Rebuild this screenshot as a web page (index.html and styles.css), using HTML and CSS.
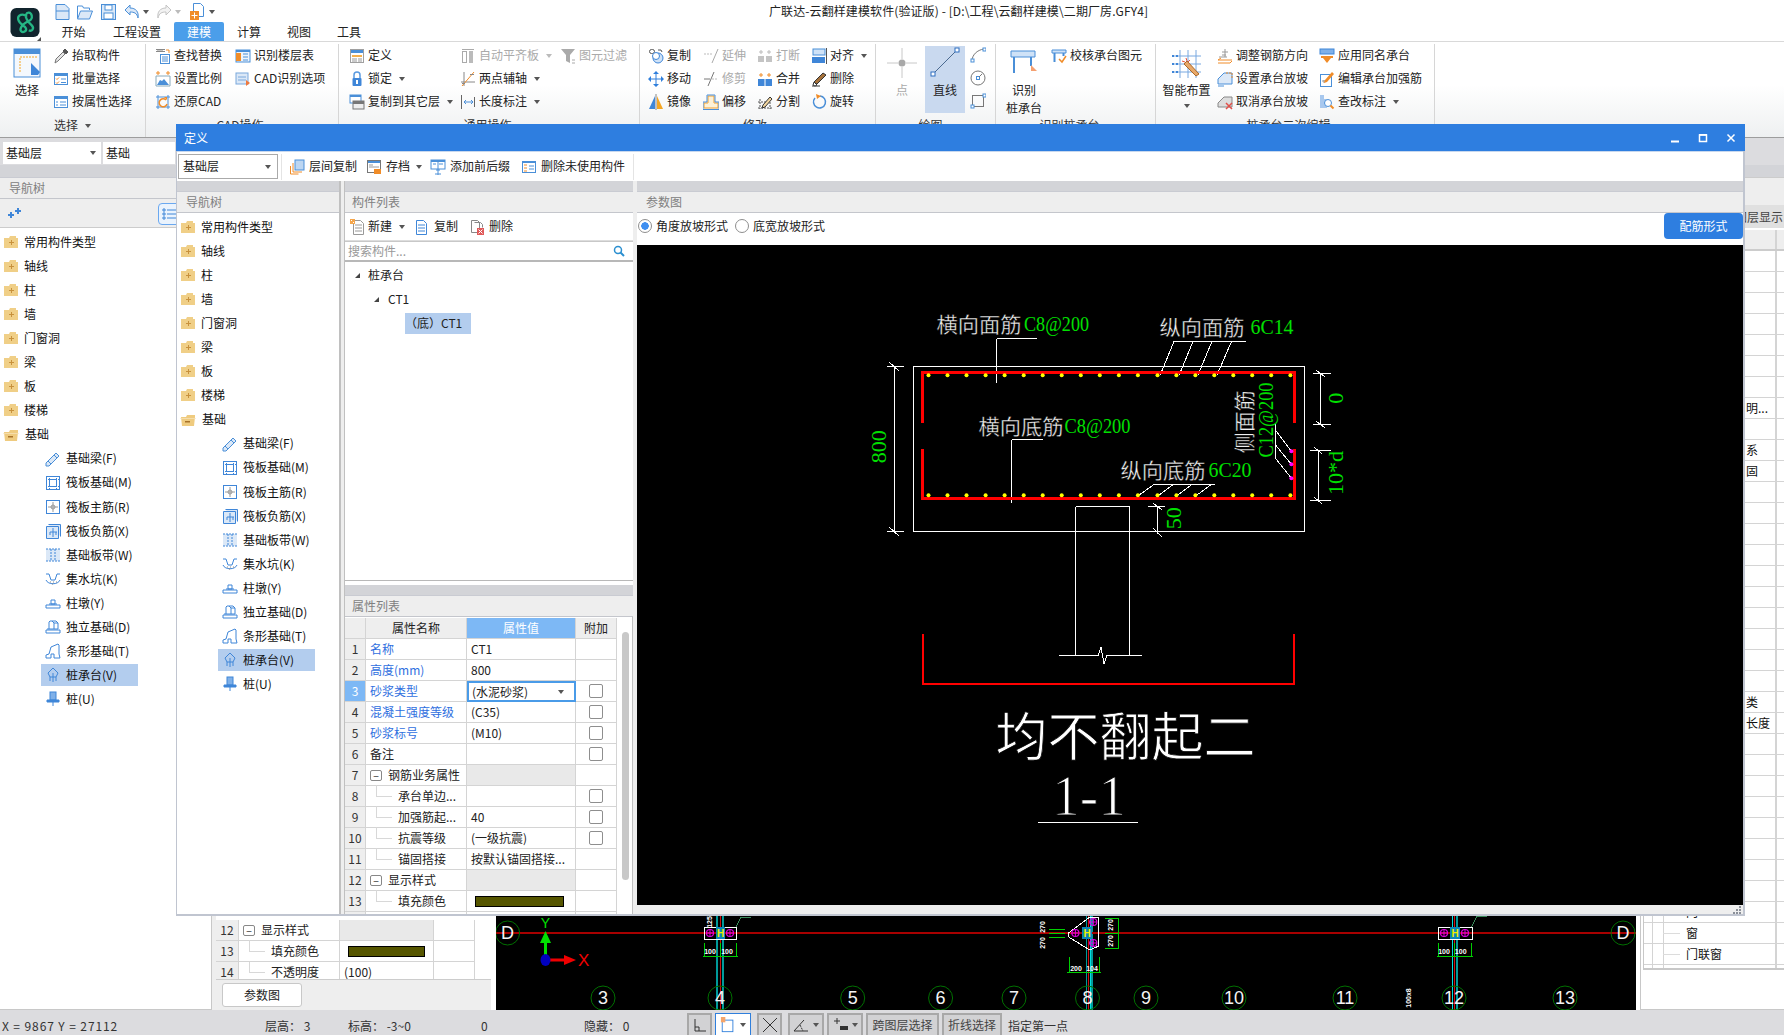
FILE: index.html
```html
<!DOCTYPE html>
<html lang="zh-CN">
<head>
<meta charset="utf-8">
<title>广联达-云翻样建模软件</title>
<link rel="stylesheet" href="styles.css">
</head>
<body>
<svg class="defs" width="0" height="0" aria-hidden="true">
<defs>
<symbol id="pick" viewBox="0 0 16 16"><path d="M2 15l1-4 7-7 2 2-7 7z" fill="#e6e6e6" stroke="#777"/><path d="M10 3l2-2 3 3-2 2z" fill="#555" stroke="#555"/></symbol>
<symbol id="batch" viewBox="0 0 16 16"><rect x="1.500" y="2.500" width="13" height="11" fill="#fff" stroke="#4a8fd8"/><rect x="1" y="2" width="14" height="3" fill="#4a8fd8"/><path d="M3 7.500l1 1 2-2M3 11.500l1 1 2-2" stroke="#f08c28" fill="none"/><path d="M8 8h5M8 11.500h5" stroke="#4a8fd8"/></symbol>
<symbol id="attr" viewBox="0 0 16 16"><rect x="1.500" y="2.500" width="13" height="11" fill="#fff" stroke="#4a8fd8"/><rect x="1" y="2" width="14" height="3" fill="#4a8fd8"/><path d="M3 8h2M3 11h2M7 8h6M7 11h6" stroke="#4a8fd8"/></symbol>
<symbol id="find" viewBox="0 0 16 16"><path d="M1 1.500h9M1 3.500h9M3 1v3M5 1v3M7 1v3" stroke="#888" fill="none"/><path d="M11 2h3v3" stroke="#f08c28" fill="none"/><rect x="5.500" y="6.500" width="9" height="9" fill="#fff" stroke="#4a8fd8"/><path d="M7 9h6M7 11h6M7 13h6" stroke="#4a8fd8"/></symbol>
<symbol id="floor" viewBox="0 0 16 16"><rect x="1" y="2" width="14" height="12" fill="#eef4fb" stroke="#4a8fd8"/><rect x="1" y="2" width="14" height="2" fill="#4a8fd8"/><rect x="1" y="5" width="5" height="8" fill="#f08c28"/><path d="M8 6h5M8 9h5M8 12h5" stroke="#4a8fd8"/></symbol>
<symbol id="scale" viewBox="0 0 16 16"><path d="M1 15V5h14v10z" fill="#fff" stroke="#8ab"/><path d="M2 14l3-5 2 1 2-2 5 6z" fill="#4a8fd8"/><path d="M3 0v4M1 2h4M13 0v4M11 2h4" stroke="#f08c28"/></symbol>
<symbol id="cadopt" viewBox="0 0 16 16"><rect x="1" y="2" width="12" height="11" fill="#dbe8f7" stroke="#7aa8dc"/><path d="M3 6h8M3 9h8" stroke="#7aa8dc"/><path d="M11 9l4 3-4 3z" fill="#f0793c"/></symbol>
<symbol id="restore" viewBox="0 0 16 16"><path d="M3 1v14M1 3h14M13 1v14M1 13h14" stroke="#4a8fd8" fill="none"/><path d="M11 6a4 4 0 1 0 1 4" stroke="#f08c28" fill="none" stroke-width="1.500"/><path d="M9 3h3v3z" fill="#f08c28"/></symbol>
<symbol id="def" viewBox="0 0 16 16"><rect x="1.500" y="1.500" width="13" height="13" fill="#fff" stroke="#a0a0a0"/><rect x="2" y="2" width="12" height="3" fill="#4a8fd8"/><rect x="3" y="7" width="10" height="2" fill="#f5b04c"/><path d="M3 11h5M9 11h4M3 13h5M9 13h4" stroke="#999"/></symbol>
<symbol id="lock" viewBox="0 0 16 16"><path d="M5 7V4a3 3 0 0 1 6 0v3" stroke="#5a9ae0" stroke-width="1.500" fill="none"/><rect x="3.500" y="7" width="9" height="8" rx="1" fill="#3f86d8"/><rect x="7" y="9" width="2" height="4" fill="#fff"/></symbol>
<symbol id="copyf" viewBox="0 0 16 16"><rect x="1" y="1" width="11" height="8" fill="#fff" stroke="#4a8fd8"/><rect x="1" y="1" width="11" height="2" fill="#4a8fd8"/><rect x="4" y="7" width="11" height="8" fill="#eee" stroke="#777"/><rect x="4" y="7" width="11" height="3" fill="#777"/></symbol>
<symbol id="autoalign" viewBox="0 0 16 16"><path d="M2 1.500h12" stroke="#aaa"/><rect x="2.500" y="3.500" width="4" height="11" fill="#fff" stroke="#aaa"/><rect x="9" y="3" width="4" height="12" fill="#bbb"/></symbol>
<symbol id="filter" viewBox="0 0 16 16"><path d="M1 1h14l-5 6v8l-4-2V7z" fill="#aaa"/><path d="M12 12h3M12 15h3" stroke="#aaa"/></symbol>
<symbol id="twopt" viewBox="0 0 16 16"><path d="M4 1v14M1 11h14" stroke="#888"/><path d="M14 1L2 15" stroke="#f08c28"/><path d="M10 3h4v1h-4zM2 12h3v1H2z" fill="#888"/></symbol>
<symbol id="length" viewBox="0 0 16 16"><path d="M1.500 1v14M14.500 3v10" stroke="#666"/><path d="M4 8h9M4 8l2-2M4 8l2 2M13 8l-2-2M13 8l-2 2" stroke="#4a8fd8" fill="none"/></symbol>
<symbol id="copy" viewBox="0 0 16 16"><rect x="1.500" y="1.500" width="5" height="4" fill="none" stroke="#555" rx="2"/><circle cx="10" cy="10" r="5" fill="#cfe2f7" stroke="#3f86d8"/><circle cx="8" cy="8" r="3.500" fill="#fff" stroke="#3f86d8"/><path d="M10 2h3l1 2" stroke="#555" fill="none"/></symbol>
<symbol id="move" viewBox="0 0 16 16"><path d="M8 1v14M1 8h14" stroke="#2f7fdc"/><path d="M8 0l3 3H5zM8 16l3-3H5zM0 8l3-3v6zM16 8l-3-3v6z" fill="#2f7fdc"/></symbol>
<symbol id="mirror" viewBox="0 0 16 16"><path d="M7 2v13H1z" fill="#3f86d8"/><path d="M9 2v13h6z" fill="#f5a623"/><path d="M8 0v16" stroke="#888"/></symbol>
<symbol id="extend" viewBox="0 0 16 16"><path d="M1 6h9" stroke="#bbb" stroke-dasharray="2 1"/><path d="M15 1L9 15" stroke="#aaa"/></symbol>
<symbol id="trim" viewBox="0 0 16 16"><path d="M1 8h6" stroke="#777"/><path d="M9 8h6" stroke="#bbb" stroke-dasharray="2 1"/><path d="M11 1L5 15" stroke="#777"/></symbol>
<symbol id="offset" viewBox="0 0 16 16"><path d="M1 14V9h4V2h6v7h4v5z" fill="#fdf2d8" stroke="#f0a030"/><path d="M0 15.500V8h4V1h8v7h4v7.500z" fill="none" stroke="#4a8fd8"/></symbol>
<symbol id="break" viewBox="0 0 16 16"><rect x="1" y="8" width="6" height="6" fill="#c4c4c4"/><rect x="9" y="8" width="6" height="6" fill="#c4c4c4"/><path d="M4 2v4M2 4h4M12 2v4M10 4h4" stroke="#bbb"/></symbol>
<symbol id="merge" viewBox="0 0 16 16"><rect x="1" y="8" width="14" height="7" fill="#3f86d8"/><path d="M8 8v7" stroke="#fff"/><path d="M4 2v4M2 4h4M12 2v4M10 4h4" stroke="#f08c28"/></symbol>
<symbol id="split" viewBox="0 0 16 16"><path d="M1 14h14M1 8h8M3 5v10M13 8v7" stroke="#555" fill="none" stroke-dasharray="2 1"/><path d="M6 11l7-8 2 2-7 8-3 1z" fill="#f3d7a0" stroke="#333"/></symbol>
<symbol id="align" viewBox="0 0 16 16"><rect x="2" y="1" width="12" height="6" fill="#cfe2f7" stroke="#4a8fd8"/><rect x="1" y="9" width="13" height="6" fill="#3f86d8"/><path d="M15.500 0v16" stroke="#555"/></symbol>
<symbol id="del" viewBox="0 0 16 16"><path d="M1 15h8" stroke="#333"/><path d="M4 12l-1-1 9-9 3 2-9 9-2-1z" fill="#a5713a" stroke="#333"/><path d="M3 11l3 3-2 1-2-1z" fill="#fff" stroke="#333"/></symbol>
<symbol id="rotate" viewBox="0 0 16 16"><path d="M9 2a6 6 0 1 1-5 2" fill="none" stroke="#4a8fd8" stroke-width="1.500"/><path d="M5 0l5 2-4 3z" fill="#f08c28"/></symbol>
<symbol id="arc" viewBox="0 0 16 16"><path d="M2 14C2 8 7 3 14 2" fill="none" stroke="#777"/><rect x="1" y="12" width="3" height="3" fill="#fff" stroke="#4a8fd8"/><rect x="13" y="1" width="3" height="3" fill="#fff" stroke="#4a8fd8"/></symbol>
<symbol id="circ" viewBox="0 0 16 16"><circle cx="8" cy="8" r="7" fill="none" stroke="#777"/><rect x="6.500" y="6.500" width="3" height="3" fill="#fff" stroke="#4a8fd8"/><path d="M9 7l3-3" stroke="#777"/></symbol>
<symbol id="rectd" viewBox="0 0 16 16"><rect x="2.500" y="2.500" width="11" height="11" fill="none" stroke="#777"/><rect x="1" y="12" width="3" height="3" fill="#fff" stroke="#4a8fd8"/><rect x="13" y="1" width="3" height="3" fill="#fff" stroke="#4a8fd8"/></symbol>
<symbol id="check" viewBox="0 0 16 16"><path d="M1 2h14v3H1z" fill="#cfe2f7" stroke="#4a8fd8"/><path d="M3.500 5v9M12.500 5v3" stroke="#4a8fd8" stroke-width="2"/><path d="M8 11l3 3 4-6" stroke="#f08c28" fill="none" stroke-width="1.500"/></symbol>
<symbol id="adjust" viewBox="0 0 16 16"><path d="M8 1v8M5 4h6M5 7h4M2 9h8" stroke="#999" fill="none"/><path d="M1 12h14M1 12l3-2M1 15h12M13 15l2-2" stroke="#f08c28" fill="none"/></symbol>
<symbol id="slope" viewBox="0 0 16 16"><path d="M1 8l6-6h8v11H1z" fill="#dbe8f7" stroke="#4a8fd8"/><path d="M9 2h6v6" fill="none" stroke="#f08c28" stroke-dasharray="2 1"/><path d="M1 15h6" stroke="#4a8fd8"/></symbol>
<symbol id="unslope" viewBox="0 0 16 16"><path d="M1 9l6-6h8v10H1z" fill="#ddd" stroke="#888"/><path d="M9 9l6 6M15 9l-6 6" stroke="#e0504a" stroke-width="1.500"/></symbol>
<symbol id="apply" viewBox="0 0 16 16"><rect x="1" y="1" width="14" height="5" fill="#7fb0e8" stroke="#3f86d8"/><rect x="2" y="8" width="12" height="2" fill="#f08c28"/><path d="M4 10h8l-4 5z" fill="#f08c28"/></symbol>
<symbol id="editr" viewBox="0 0 16 16"><rect x="1.500" y="3.500" width="11" height="12" fill="#fff" stroke="#4a8fd8"/><path d="M5 9v3M3 10h4" stroke="#999"/><path d="M6 9l7-8 2 2-7 8-3 1z" fill="#f08c28"/></symbol>
<symbol id="markedit" viewBox="0 0 16 16"><path d="M1 1h4v4h3v9H1z" fill="#a8c8ee"/><circle cx="9" cy="9" r="3.500" fill="#fff" stroke="#4a8fd8"/><path d="M11.500 11.500l3 3" stroke="#f08c28" stroke-width="2"/></symbol>
<symbol id="fclosed" viewBox="0 0 14 12"><path d="M0 2h5l1-2h6v2h2v10H0z" fill="#f0cf87"/><path d="M5 6h5v1H5z" fill="#c8913c"/><path d="M7 4h1v5H7z" fill="#c8913c"/></symbol>
<symbol id="fopen" viewBox="0 0 16 12"><path d="M1 3h5l1-2h8v2l-1 9H2z" fill="#efcb7f"/><path d="M0 4h16l-1 1H1z" fill="#f5ddab"/><path d="M5 7h5v1.500H5z" fill="#a8732a"/></symbol>
<symbol id="t-beam" viewBox="0 0 16 16"><path d="M1 12L11 2l3 3L4 15H1z" fill="#dbe8f7" stroke="#4a8fd8"/><path d="M3 10l3 3M9 4l3 3" stroke="#4a8fd8"/></symbol>
<symbol id="t-raft" viewBox="0 0 16 16"><rect x="1.500" y="1.500" width="13" height="13" fill="none" stroke="#3f86d8"/><rect x="4.500" y="4.500" width="7" height="7" fill="none" stroke="#3f86d8"/><path d="M1 4.500h14M1 11.500h14M4.500 1v14M11.500 1v14" stroke="#3f86d8" stroke-dasharray="1 1"/></symbol>
<symbol id="t-rmain" viewBox="0 0 16 16"><rect x="1.500" y="1.500" width="13" height="13" fill="#fff" stroke="#3f86d8"/><path d="M8 3v10M3 8h10" stroke="#999"/><circle cx="8" cy="8" r="2" fill="none" stroke="#999"/></symbol>
<symbol id="t-rneg" viewBox="0 0 16 16"><path d="M1.500 3.500h12v12h-12zM3.500 1.500h12v12" fill="#dbe8f7" stroke="#3f86d8"/><path d="M8 5v9M5 9h7M5 9v3M11 9v3" stroke="#3f86d8" fill="none"/></symbol>
<symbol id="t-strip" viewBox="0 0 16 16"><rect x="1" y="2" width="14" height="12" fill="#dbe8f7"/><path d="M1 2h14M1 14h14M6 2v12M10 2v12" stroke="#3f86d8" stroke-dasharray="2 1"/></symbol>
<symbol id="t-pit" viewBox="0 0 16 16"><path d="M1 3h3l2 6h4l2-6h3" fill="none" stroke="#3f86d8"/><path d="M1 9c2 5 12 5 14 0" fill="none" stroke="#3f86d8"/><path d="M5 11h1M8 11h1M11 11h1M7 13h1" stroke="#888"/></symbol>
<symbol id="t-pier" viewBox="0 0 16 16"><path d="M6 5h4v4H6zM4 9h8M1 10h14v3H1z" fill="none" stroke="#3f86d8"/></symbol>
<symbol id="t-iso" viewBox="0 0 16 16"><path d="M5 2h6l2 2v6H4V3zM1 11h14v3H1zM3 11V9" fill="#fff" stroke="#3f86d8"/><path d="M7 2l2 2h4M9 4v6" fill="none" stroke="#3f86d8"/></symbol>
<symbol id="t-stripf" viewBox="0 0 16 16"><path d="M1 15v-3l3-1 2-7 7-3 1 1v9l1 4H9v-4H6v4z" fill="#fff" stroke="#3f86d8"/></symbol>
<symbol id="t-cap" viewBox="0 0 16 16"><path d="M8 1l5 5-2 4H5L3 6z" fill="none" stroke="#3f86d8"/><path d="M5 10v4M8 6v9M11 10v4" stroke="#3f86d8"/></symbol>
<symbol id="t-pile" viewBox="0 0 16 16"><rect x="5" y="1" width="6" height="8" fill="#7fb0e8" stroke="#3f86d8"/><path d="M2 9h12v2H2zM8 11v4" fill="#3f86d8" stroke="#3f86d8"/></symbol>
<symbol id="b-floorcopy" viewBox="0 0 16 16"><rect x="6" y="1" width="9" height="10" fill="#bcd6f2" stroke="#4a8fd8"/><path d="M4 4v9h9M1.500 7v8h8" fill="none" stroke="#f08c28"/></symbol>
<symbol id="b-save" viewBox="0 0 16 16"><rect x="1.500" y="1.500" width="13" height="12" fill="#fff" stroke="#777"/><rect x="2" y="2" width="12" height="2" fill="#4a8fd8"/><path d="M3 6h4M3 8h10" stroke="#999"/><rect x="8" y="10" width="7" height="5" fill="#f08c28"/></symbol>
<symbol id="b-prefix" viewBox="0 0 16 16"><rect x="1" y="1" width="14" height="9" fill="#fff" stroke="#4a8fd8"/><rect x="1" y="1" width="14" height="2" fill="#4a8fd8"/><path d="M3 5h3M9 5h4M8 3v13M5 15h6M6 11h4" stroke="#4a8fd8"/></symbol>
<symbol id="b-delun" viewBox="0 0 16 16"><rect x="1.500" y="2.500" width="13" height="11" fill="#fff" stroke="#4a8fd8"/><rect x="1" y="2" width="14" height="2" fill="#4a8fd8"/><path d="M3 6h3M3 9h3M3 12h3" stroke="#f08c28"/><path d="M8 7h5M8 10h5" stroke="#4a8fd8"/></symbol>
<symbol id="b-new" viewBox="0 0 16 16"><path d="M3.500 1.500h7l3 3v11h-10z" fill="#fff" stroke="#999"/><path d="M5 6h7M5 9h7M5 12h7" stroke="#999"/><path d="M0 0h5v5H0z" fill="#f5a64c"/><path d="M1 1h1v1H1zM3 3h1v1H3z" fill="#fff"/></symbol>
<symbol id="b-dup" viewBox="0 0 16 16"><path d="M2.500 1.500h7l3 3v11h-10z" fill="#fff" stroke="#3f86d8"/><path d="M4 6h7M4 9h7M4 12h7" stroke="#3f86d8"/></symbol>
<symbol id="b-del" viewBox="0 0 16 16"><path d="M2.500 1.500h6l2 2v10h-8z" fill="#fff" stroke="#888"/><path d="M5.500 3.500h6l2 2v3" fill="none" stroke="#888"/><rect x="8" y="9" width="7" height="7" fill="#e05a5a"/><path d="M9.500 10.500l4 4M13.500 10.500l-4 4" stroke="#fff"/></symbol>
</defs>
</svg>

<div class="app">
  <header class="top">
    <div class="logo-cell">
      <svg class="logo" viewBox="0 0 30 30"><rect width="30" height="30" rx="6" fill="#11242d"/><path d="M17 9c-4-4-10-2-9 3s7 6 8 9-3 5-5 3 1-7 5-9 7-3 6-7-5-4-6-1 3 8 6 11 0 7-3 5" fill="none" stroke="#25b584" stroke-width="2.400"/></svg>
      <span class="logo-corner"></span>
    </div>
    <div class="top-main">
      <div class="qa">
        <svg class="qa-i" viewBox="0 0 14 16"><path d="M.5.500h9l4 4v11H.5z" fill="#dbe8f7" stroke="#4a8fd8"/><path d="M.5 7h13" stroke="#4a8fd8"/></svg>
        <svg class="qa-i m-open" viewBox="0 0 16 16"><path d="M.5 14V2h5l1 2h6v2" fill="none" stroke="#4a8fd8"/><path d="M.5 15l3-8h12l-3 8z" fill="#dbe8f7" stroke="#4a8fd8"/></svg>
        <svg class="qa-i m-save" viewBox="0 0 15 16"><rect x=".5" y=".5" width="14" height="15" fill="#dbe8f7" stroke="#4a8fd8"/><rect x="4" y="1" width="7" height="5" fill="#fff" stroke="#4a8fd8"/><rect x="3" y="9" width="9" height="6" fill="#fff" stroke="#4a8fd8"/></svg>
        <svg class="qa-i m-undo" viewBox="0 0 16 16"><path d="M6 1L1 6l5 5V8c4 0 7 1 8 6 1-6-2-10-8-10z" fill="#dbe8f7" stroke="#4a8fd8"/></svg>
        <span class="tri m-t1"></span>
        <svg class="qa-i m-redo" viewBox="0 0 16 16"><path d="M10 1l5 5-5 5V8C6 8 3 9 2 14 1 8 4 4 10 4z" fill="#f2f2f2" stroke="#c4c4c4"/></svg>
        <span class="tri tri-l m-t2"></span>
        <svg class="qa-i m-doc" viewBox="0 0 14 18"><path d="M3.500 .5h7l3 3v10H3.500z" fill="#fff" stroke="#4a8fd8"/><rect x="0" y="8" width="9" height="9" fill="#f08c28"/><path d="M4.500 9.500v6M1.500 12.500h6" stroke="#fff"/></svg>
        <span class="tri m-t3"></span>
        <span class="doc-title">广联达-云翻样建模软件(验证版) - [D:\工程\云翻样建模\二期厂房.GFY4]</span>
      </div>
      <nav class="tabs">
        <span class="tab">开始</span><span class="tab">工程设置</span><span class="tab tab-on">建模</span><span class="tab">计算</span><span class="tab">视图</span><span class="tab">工具</span>
      </nav>
    </div>
  </header>

  <section class="ribbon">
    <div class="grp g1">
      <div class="grp-body">
        <div class="big big-sel">
          <svg class="big-i i-sel" viewBox="0 0 28 30"><rect x="1" y="1" width="26" height="28" fill="#f4f8fd" stroke="#4a8fd8"/><rect x="1" y="1" width="26" height="5" fill="#4a8fd8"/><path d="M24 9H7v16" fill="none" stroke="#f5a623" stroke-dasharray="2 1"/><path d="M18 15l9 9-2 3h-7z" fill="#3f86d8"/></svg>
          <span>选择</span>
        </div>
        <div class="col">
          <div class="it"><svg class="i"><use href="#pick"/></svg>抬取构件</div>
          <div class="it"><svg class="i"><use href="#batch"/></svg>批量选择</div>
          <div class="it"><svg class="i"><use href="#attr"/></svg>按属性选择</div>
        </div>
      </div>
      <div class="grp-foot">选择<span class="tri"></span></div>
    </div>
    <div class="grp g2">
      <div class="grp-body">
        <div class="col w80">
          <div class="it"><svg class="i"><use href="#find"/></svg>查找替换</div>
          <div class="it"><svg class="i"><use href="#scale"/></svg>设置比例</div>
          <div class="it"><svg class="i"><use href="#restore"/></svg>还原CAD</div>
        </div>
        <div class="col">
          <div class="it"><svg class="i"><use href="#floor"/></svg>识别楼层表</div>
          <div class="it"><svg class="i"><use href="#cadopt"/></svg>CAD识别选项</div>
        </div>
      </div>
      <div class="grp-foot">CAD操作<span class="tri"></span></div>
    </div>
    <div class="grp g3">
      <div class="grp-body">
        <div class="col w111">
          <div class="it"><svg class="i"><use href="#def"/></svg>定义</div>
          <div class="it"><svg class="i"><use href="#lock"/></svg>锁定<span class="tri"></span></div>
          <div class="it"><svg class="i"><use href="#copyf"/></svg>复制到其它层<span class="tri"></span></div>
        </div>
        <div class="col w100">
          <div class="it off"><svg class="i"><use href="#autoalign"/></svg>自动平齐板<span class="tri tri-l"></span></div>
          <div class="it"><svg class="i"><use href="#twopt"/></svg>两点辅轴<span class="tri"></span></div>
          <div class="it"><svg class="i"><use href="#length"/></svg>长度标注<span class="tri"></span></div>
        </div>
        <div class="col">
          <div class="it off"><svg class="i"><use href="#filter"/></svg>图元过滤</div>
        </div>
      </div>
      <div class="grp-foot">通用操作<span class="tri"></span></div>
    </div>
    <div class="grp g4">
      <div class="grp-body">
        <div class="col w55">
          <div class="it"><svg class="i"><use href="#copy"/></svg>复制</div>
          <div class="it"><svg class="i"><use href="#move"/></svg>移动</div>
          <div class="it"><svg class="i"><use href="#mirror"/></svg>镜像</div>
        </div>
        <div class="col w54">
          <div class="it off"><svg class="i"><use href="#extend"/></svg>延伸</div>
          <div class="it off"><svg class="i"><use href="#trim"/></svg>修剪</div>
          <div class="it"><svg class="i"><use href="#offset"/></svg>偏移</div>
        </div>
        <div class="col w54">
          <div class="it off"><svg class="i"><use href="#break"/></svg>打断</div>
          <div class="it"><svg class="i"><use href="#merge"/></svg>合并</div>
          <div class="it"><svg class="i"><use href="#split"/></svg>分割</div>
        </div>
        <div class="col">
          <div class="it"><svg class="i"><use href="#align"/></svg>对齐<span class="tri"></span></div>
          <div class="it"><svg class="i"><use href="#del"/></svg>删除</div>
          <div class="it"><svg class="i"><use href="#rotate"/></svg>旋转</div>
        </div>
      </div>
      <div class="grp-foot">修改<span class="tri"></span></div>
    </div>
    <div class="grp g5">
      <div class="grp-body">
        <div class="big big-pt off">
          <svg class="big-i i-pt" viewBox="0 0 30 30"><path d="M15 0v11M15 19v11M0 15h11M19 15h11" stroke="#c8c8c8"/><circle cx="15" cy="15" r="3.500" fill="#a8a8a8"/></svg>
          <span>点</span>
        </div>
        <div class="big big-line">
          <svg class="big-i i-line" viewBox="0 0 30 30"><path d="M3 27L27 3" stroke="#4a6a90"/><rect x="1" y="25" width="4" height="4" fill="#fff" stroke="#2f6fc0"/><rect x="25" y="1" width="4" height="4" fill="#fff" stroke="#2f6fc0"/></svg>
          <span>直线</span>
        </div>
        <div class="col col-draw">
          <svg class="i"><use href="#arc"/></svg>
          <svg class="i"><use href="#circ"/></svg>
          <svg class="i"><use href="#rectd"/></svg>
        </div>
      </div>
      <div class="grp-foot">绘图<span class="tri"></span></div>
    </div>
    <div class="grp g6">
      <div class="grp-body">
        <div class="big big-pile">
          <svg class="big-i i-pile" viewBox="0 0 28 24"><path d="M1 1h24v6H1z" fill="#cfe2f7" stroke="#4a8fd8"/><path d="M4 7v16M21 7v9" stroke="#4a8fd8" stroke-width="2"/><path d="M21 15l6 6h-6z" fill="#f5a070"/></svg>
          <span>识别<br>桩承台</span>
        </div>
        <div class="col">
          <div class="it"><svg class="i"><use href="#check"/></svg>校核承台图元</div>
        </div>
      </div>
      <div class="grp-foot">识别桩承台<span class="tri"></span></div>
    </div>
    <div class="grp g7">
      <div class="grp-body">
        <div class="big big-smart">
          <svg class="big-i i-smart" viewBox="0 0 30 30"><path d="M1 6h28M1 14h28M1 22h28M8 0v28M16 0v28M24 0v28" stroke="#78a8e0"/><path d="M0 6h6M0 14h6M0 22h6" stroke="#3f86d8" stroke-width="2" stroke-dasharray="2 2"/><path d="M12 14l12 12 3-2L15 11z" fill="#e8a868" stroke="#a8682c"/><path d="M10 11l3 1M14 8l1 3M18 10l-2 2" stroke="#e8503a"/></svg>
          <span>智能布置</span>
          <span class="tri tri-down"></span>
        </div>
        <div class="col w102">
          <div class="it"><svg class="i"><use href="#adjust"/></svg>调整钢筋方向</div>
          <div class="it"><svg class="i"><use href="#slope"/></svg>设置承台放坡</div>
          <div class="it"><svg class="i"><use href="#unslope"/></svg>取消承台放坡</div>
        </div>
        <div class="col">
          <div class="it"><svg class="i"><use href="#apply"/></svg>应用同名承台</div>
          <div class="it"><svg class="i"><use href="#editr"/></svg>编辑承台加强筋</div>
          <div class="it"><svg class="i"><use href="#markedit"/></svg>查改标注<span class="tri"></span></div>
        </div>
      </div>
      <div class="grp-foot">桩承台二次编辑<span class="tri"></span></div>
    </div>
  </section>

  <main class="work">
    <div class="floorbar">
      <div class="combo c-floor">基础层<span class="tri"></span></div>
      <div class="combo c-type">基础</div>
    </div>
    <div class="band"></div>
    <div class="panes">
      <aside class="bgnav">
        <div class="phead">导航树</div>
        <div class="navtools">
          <svg class="addi" viewBox="0 0 14 12"><path d="M3 4v6M0 7h6M10 0v6M7 3h6" stroke="#3f86d8" stroke-width="2"/></svg>
          <span class="listbtn"><svg viewBox="0 0 16 16"><path d="M2 3h2v2H2zM2 7h2v2H2zM2 11h2v2H2z" fill="none" stroke="#3f86d8"/><path d="M6 4h9M6 8h9M6 12h9" stroke="#3f86d8"/></svg></span>
        </div>
        <div class="tree">
          <div class="tr"><svg class="fd"><use href="#fclosed"/></svg>常用构件类型</div>
          <div class="tr"><svg class="fd"><use href="#fclosed"/></svg>轴线</div>
          <div class="tr"><svg class="fd"><use href="#fclosed"/></svg>柱</div>
          <div class="tr"><svg class="fd"><use href="#fclosed"/></svg>墙</div>
          <div class="tr"><svg class="fd"><use href="#fclosed"/></svg>门窗洞</div>
          <div class="tr"><svg class="fd"><use href="#fclosed"/></svg>梁</div>
          <div class="tr"><svg class="fd"><use href="#fclosed"/></svg>板</div>
          <div class="tr"><svg class="fd"><use href="#fclosed"/></svg>楼梯</div>
          <div class="tr"><svg class="fd fo"><use href="#fopen"/></svg>基础</div>
          <div class="tr ch"><span class="sel-w"><svg class="i"><use href="#t-beam"/></svg>基础梁(F)</span></div>
          <div class="tr ch"><span class="sel-w"><svg class="i"><use href="#t-raft"/></svg>筏板基础(M)</span></div>
          <div class="tr ch"><span class="sel-w"><svg class="i"><use href="#t-rmain"/></svg>筏板主筋(R)</span></div>
          <div class="tr ch"><span class="sel-w"><svg class="i"><use href="#t-rneg"/></svg>筏板负筋(X)</span></div>
          <div class="tr ch"><span class="sel-w"><svg class="i"><use href="#t-strip"/></svg>基础板带(W)</span></div>
          <div class="tr ch"><span class="sel-w"><svg class="i"><use href="#t-pit"/></svg>集水坑(K)</span></div>
          <div class="tr ch"><span class="sel-w"><svg class="i"><use href="#t-pier"/></svg>柱墩(Y)</span></div>
          <div class="tr ch"><span class="sel-w"><svg class="i"><use href="#t-iso"/></svg>独立基础(D)</span></div>
          <div class="tr ch"><span class="sel-w"><svg class="i"><use href="#t-stripf"/></svg>条形基础(T)</span></div>
          <div class="tr ch"><span class="sel-w on"><svg class="i"><use href="#t-cap"/></svg>桩承台(V)</span></div>
          <div class="tr ch"><span class="sel-w"><svg class="i"><use href="#t-pile"/></svg>桩(U)</span></div>
        </div>
      </aside>

      <section class="bgmid">
        <div class="bgtable">
          <div class="brow"><span class="num">12</span><span class="nm gl"><i class="minus">−</i>显示样式</span><span class="val grey"></span><span class="ex"></span></div>
          <div class="brow"><span class="num">13</span><span class="nm kid">填充颜色</span><span class="val"><i class="swatch sw-b"></i></span><span class="ex"></span></div>
          <div class="brow brow-cut"><span class="num">14</span><span class="nm kid">不透明度</span><span class="val">(100)</span><span class="ex"></span></div>
        </div>
        <div class="bgfoot"><span class="parambtn">参数图</span></div>
      </section>

      <section class="cad">
        <svg class="cad-svg" viewBox="496 177 1140 833" width="1140" height="833">
          <g class="al">
            <path class="teal" d="M717 916V1010M722.800 916V1010M1086.600 916V1010M1092 916V1010M1457 916V1010"/>
            <path class="cy" d="M1452 916V1010M1090 916V1010"/>
            <path class="rl" d="M720.500 916V1010M1088.500 916V1010M1454 916V1010"/>
            <path class="dr" d="M496 933H1636"/>
            <rect class="wl" x="704.500" y="927.500" width="32" height="12"/>
            <rect class="wl" x="1438.500" y="927.500" width="34" height="12"/>
            <path class="wl" d="M1068.700 933L1089.700 917H1098.700V946L1089.700 950L1068.700 937Z"/>
            <path class="gr" d="M702.700 956H738M704.500 943V957M720.500 943V957M736 943V957M1436.700 956H1472.700M1438.500 943V957M1454 943V957M1471 943V957M1048.700 929H1065M1048.700 933H1065M1048.700 937H1065M1104.500 918H1118.700M1104.500 933H1118.700M1104.500 948H1118.700M1118 918V949M1067.400 972H1101M1069.600 957V972M1099 957V972"/>
            <path class="dg" d="M736 927L741 917H751M1471.700 927L1476.700 916.700H1486.700"/>
          </g>
          <g class="mg">
            <circle cx="710" cy="933" r="3.500"/><circle cx="730" cy="933" r="3.500"/><circle cx="1075.400" cy="933" r="3.500"/><circle cx="1093.300" cy="922" r="3.500"/><circle cx="1093.300" cy="943" r="3.500"/><circle cx="1444" cy="933" r="3.500"/><circle cx="1465" cy="933" r="3.500"/>
            <path d="M706 933h8M710 929v8M726 933h8M730 929v8M1071 933h8M1075.400 929v8M1089 922h8M1093.300 918v8M1089 943h8M1093.300 939v8M1440 933h8M1444 929v8M1461 933h8M1465 929v8"/>
          </g>
          <g class="sq">
            <rect x="716" y="927" width="9" height="12"/><rect x="1082" y="927" width="10" height="12"/><rect x="1450" y="927" width="10" height="12"/>
          </g>
          <g class="hh">
            <text x="720.500" y="937">H</text><text x="1087" y="937">H</text><text x="1455" y="937">H</text>
          </g>
          <g class="tiny">
            <text x="710" y="954">100</text><text x="727" y="954">100</text><text x="1444" y="954">100</text><text x="1460.700" y="954">100</text>
            <text x="1076" y="971">200</text><text x="1092" y="971">104</text>
            <text x="712" y="922" transform="rotate(-90 712 922)">125</text>
            <text x="1045" y="927" transform="rotate(-90 1045 927)">270</text>
            <text x="1045" y="943" transform="rotate(-90 1045 943)">270</text>
            <text x="1113" y="925" transform="rotate(-90 1113 925)">270</text>
            <text x="1113" y="941" transform="rotate(-90 1113 941)">270</text>
            <text x="1411" y="998" transform="rotate(-90 1411 998)">100x8</text>
          </g>
          <g class="bub">
            <circle cx="507.600" cy="933" r="12"/><circle cx="1623" cy="933" r="12"/>
            <circle cx="603" cy="998" r="12"/><circle cx="720" cy="998" r="12"/><circle cx="852.700" cy="998" r="12"/><circle cx="940.600" cy="998" r="12"/><circle cx="1014" cy="998" r="12"/><circle cx="1087.500" cy="998" r="12"/><circle cx="1146" cy="998" r="12"/><circle cx="1234" cy="998" r="12"/><circle cx="1345" cy="998" r="12"/><circle cx="1454" cy="998" r="12"/><circle cx="1565" cy="998" r="12"/>
          </g>
          <g class="bubt">
            <text x="507.600" y="939">D</text><text x="1623" y="939">D</text>
            <text x="603" y="1004">3</text><text x="720" y="1004">4</text><text x="852.700" y="1004">5</text><text x="940.600" y="1004">6</text><text x="1014" y="1004">7</text><text x="1087.500" y="1004">8</text><text x="1146" y="1004">9</text><text x="1234" y="1004">10</text><text x="1345" y="1004">11</text><text x="1454" y="1004">12</text><text x="1565" y="1004">13</text>
          </g>
          <path class="axg" d="M545.500 960V941"/><path class="axgf" d="M545.500 931L540 943H551Z"/>
          <path class="axr" d="M545.500 960H566"/><path class="axrf" d="M576 960L564 955V965Z"/>
          <ellipse class="axb" cx="545.500" cy="960" rx="5" ry="6"/>
          <text class="axty" x="545.500" y="928">Y</text>
          <text class="axtx" x="578" y="966">X</text>
        </svg>
      </section>

      <aside class="bgright">
        <div class="rtop"></div>
        <div class="rtabs"><span class="rtab">图层显示</span></div>
        <div class="rtable">
          <div class="rrow rhead"></div>
          <div class="rrow"></div><div class="rrow"></div><div class="rrow"></div><div class="rrow"></div><div class="rrow"></div><div class="rrow"></div><div class="rrow"></div>
          <div class="rrow"><span class="rt-hi">明...</span></div>
          <div class="rrow"></div>
          <div class="rrow"><span class="rt-hi">系</span></div>
          <div class="rrow"><span class="rt-hi">固</span></div>
          <div class="rrow"></div><div class="rrow"></div><div class="rrow"></div><div class="rrow"></div><div class="rrow"></div><div class="rrow"></div><div class="rrow"></div><div class="rrow"></div><div class="rrow"></div>
          <div class="rrow"></div>
          <div class="rrow"><span class="rt-hi">类</span></div>
          <div class="rrow"><span class="rt-hi">长度</span></div>
          <div class="rrow"></div><div class="rrow"></div><div class="rrow"></div><div class="rrow"></div><div class="rrow"></div><div class="rrow"></div><div class="rrow"></div><div class="rrow"></div>
          <div class="rrow rt-tree"><span class="rt-lo">门</span></div>
          <div class="rrow rt-tree"><span class="rt-lo">窗</span></div>
          <div class="rrow rt-tree"><span class="rt-lo">门联窗</span></div>
          <div class="rrow rt-tree rt-end"></div>
        </div>
      </aside>
    </div>
  </main>

  <footer class="status">
    <span class="s-t s-xy">X = 9867 Y = 27112</span>
    <span class="s-t">层高： 3</span>
    <span class="s-t">标高： -3~0</span>
    <span class="s-t">0</span>
    <span class="s-t">隐藏： 0</span>
    <span class="sb mr3"><svg viewBox="0 0 16 16"><path d="M3 2v12h11M3 10h4v4" fill="none" stroke="#333"/></svg></span>
    <span class="sb sb-on mr6"><svg viewBox="0 0 16 18"><rect x="1.500" y="3.500" width="12" height="13" fill="#fff" stroke="#2f7fdc"/><rect x="0" y="0" width="5" height="6" fill="#f5a56a"/></svg><i class="tri"></i></span>
    <span class="sb mr6"><svg viewBox="0 0 16 16"><path d="M1 1l14 14M15 1L1 15" stroke="#333"/></svg></span>
    <span class="sb mr3"><svg viewBox="0 0 16 16"><path d="M1 14h14M1 14L11 3" stroke="#333" fill="none"/><path d="M7 8l3 6" stroke="#333" stroke-dasharray="2 1"/></svg><i class="tri"></i></span>
    <span class="sb mr3"><svg viewBox="0 0 16 16"><path d="M5 1v6M2 4h6" stroke="#333"/><rect x="8" y="9" width="8" height="4" fill="#333"/></svg><i class="tri"></i></span>
    <span class="sb sb-txt mr3">跨图层选择</span>
    <span class="sb sb-txt mr6">折线选择</span>
    <span class="s-t">指定第一点</span>
  </footer>

  <div class="dialog">
    <div class="d-title">
      <span class="d-name">定义</span>
      <span class="d-btns">
        <svg viewBox="0 0 10 10"><path d="M1 8.500h8" stroke="#fff" stroke-width="2"/></svg>
        <svg viewBox="0 0 10 10"><rect x="1.500" y="2" width="7" height="6.500" fill="none" stroke="#fff" stroke-width="1.500"/><path d="M1 1.800h8" stroke="#fff" stroke-width="1.600"/></svg>
        <svg viewBox="0 0 10 10"><path d="M1.500 1.500l7 7M8.500 1.500l-7 7" stroke="#fff" stroke-width="1.500"/></svg>
      </span>
    </div>
    <div class="d-inner">
      <div class="d-tools">
        <div class="combo d-combo">基础层<span class="tri"></span></div>
        <span class="sep"></span>
        <span class="tb b1"><svg class="i"><use href="#b-floorcopy"/></svg>层间复制</span>
        <span class="tb b2"><svg class="i"><use href="#b-save"/></svg>存档<span class="tri"></span></span>
        <span class="tb b3"><svg class="i"><use href="#b-prefix"/></svg>添加前后缀</span>
        <span class="tb b4"><svg class="i"><use href="#b-delun"/></svg>删除未使用构件</span>
        <span class="sep"></span>
      </div>
      <div class="d-body">
        <div class="d-col d-nav">
          <div class="band-s"></div>
          <div class="phead">导航树</div>
          <div class="tree tree-d">
            <div class="tr"><svg class="fd"><use href="#fclosed"/></svg>常用构件类型</div>
            <div class="tr"><svg class="fd"><use href="#fclosed"/></svg>轴线</div>
            <div class="tr"><svg class="fd"><use href="#fclosed"/></svg>柱</div>
            <div class="tr"><svg class="fd"><use href="#fclosed"/></svg>墙</div>
            <div class="tr"><svg class="fd"><use href="#fclosed"/></svg>门窗洞</div>
            <div class="tr"><svg class="fd"><use href="#fclosed"/></svg>梁</div>
            <div class="tr"><svg class="fd"><use href="#fclosed"/></svg>板</div>
            <div class="tr"><svg class="fd"><use href="#fclosed"/></svg>楼梯</div>
            <div class="tr"><svg class="fd fo"><use href="#fopen"/></svg>基础</div>
            <div class="tr ch"><span class="sel-w"><svg class="i"><use href="#t-beam"/></svg>基础梁(F)</span></div>
            <div class="tr ch"><span class="sel-w"><svg class="i"><use href="#t-raft"/></svg>筏板基础(M)</span></div>
            <div class="tr ch"><span class="sel-w"><svg class="i"><use href="#t-rmain"/></svg>筏板主筋(R)</span></div>
            <div class="tr ch"><span class="sel-w"><svg class="i"><use href="#t-rneg"/></svg>筏板负筋(X)</span></div>
            <div class="tr ch"><span class="sel-w"><svg class="i"><use href="#t-strip"/></svg>基础板带(W)</span></div>
            <div class="tr ch"><span class="sel-w"><svg class="i"><use href="#t-pit"/></svg>集水坑(K)</span></div>
            <div class="tr ch"><span class="sel-w"><svg class="i"><use href="#t-pier"/></svg>柱墩(Y)</span></div>
            <div class="tr ch"><span class="sel-w"><svg class="i"><use href="#t-iso"/></svg>独立基础(D)</span></div>
            <div class="tr ch"><span class="sel-w"><svg class="i"><use href="#t-stripf"/></svg>条形基础(T)</span></div>
            <div class="tr ch"><span class="sel-w on"><svg class="i"><use href="#t-cap"/></svg>桩承台(V)</span></div>
            <div class="tr ch"><span class="sel-w"><svg class="i"><use href="#t-pile"/></svg>桩(U)</span></div>
          </div>
        </div>

        <div class="d-col d-list">
          <div class="band-s"></div>
          <div class="phead">构件列表</div>
          <div class="l-tools">
            <span class="tb t-new"><svg class="i"><use href="#b-new"/></svg>新建<span class="tri"></span></span>
            <span class="tb t-dup"><svg class="i"><use href="#b-dup"/></svg>复制</span>
            <span class="tb t-del"><svg class="i"><use href="#b-del"/></svg>删除</span>
          </div>
          <div class="l-search"><span>搜索构件...</span><svg viewBox="0 0 12 12"><circle cx="5" cy="5" r="3.500" fill="none" stroke="#2b8fd0" stroke-width="1.500"/><path d="M7.500 7.500L11 11" stroke="#2b8fd0" stroke-width="2"/></svg></div>
          <div class="l-tree">
            <div class="lt lt1"><i class="tw"></i>桩承台</div>
            <div class="lt lt2"><i class="tw"></i>CT1</div>
            <div class="lt lt3"><span class="lt-sel">（底）CT1</span></div>
          </div>
          <div class="band-s band-p"></div>
          <div class="phead">属性列表</div>
          <div class="props">
            <div class="ptable">
              <div class="prow phdr"><span class="num"></span><span class="nm ctr">属性名称</span><span class="val ctr hd-on">属性值</span><span class="ex ctr">附加</span></div>
              <div class="prow"><span class="num">1</span><span class="nm lnk">名称</span><span class="val">CT1</span><span class="ex"></span></div>
              <div class="prow"><span class="num">2</span><span class="nm lnk">高度(mm)</span><span class="val">800</span><span class="ex"></span></div>
              <div class="prow"><span class="num num-on">3</span><span class="nm lnk">砂浆类型</span><span class="val val-on">(水泥砂浆)<span class="tri"></span></span><span class="ex"><i class="cb"></i></span></div>
              <div class="prow"><span class="num">4</span><span class="nm lnk">混凝土强度等级</span><span class="val">(C35)</span><span class="ex"><i class="cb"></i></span></div>
              <div class="prow"><span class="num">5</span><span class="nm lnk">砂浆标号</span><span class="val">(M10)</span><span class="ex"><i class="cb"></i></span></div>
              <div class="prow"><span class="num">6</span><span class="nm">备注</span><span class="val"></span><span class="ex"><i class="cb"></i></span></div>
              <div class="prow"><span class="num">7</span><span class="nm gl"><i class="minus">−</i>钢筋业务属性</span><span class="val grey"></span><span class="ex"></span></div>
              <div class="prow"><span class="num">8</span><span class="nm kid">承台单边...</span><span class="val"></span><span class="ex"><i class="cb"></i></span></div>
              <div class="prow"><span class="num">9</span><span class="nm kid">加强筋起...</span><span class="val">40</span><span class="ex"><i class="cb"></i></span></div>
              <div class="prow"><span class="num">10</span><span class="nm kid">抗震等级</span><span class="val">(一级抗震)</span><span class="ex"><i class="cb"></i></span></div>
              <div class="prow"><span class="num">11</span><span class="nm kid">锚固搭接</span><span class="val">按默认锚固搭接...</span><span class="ex"></span></div>
              <div class="prow"><span class="num">12</span><span class="nm gl"><i class="minus">−</i>显示样式</span><span class="val grey"></span><span class="ex"></span></div>
              <div class="prow"><span class="num">13</span><span class="nm kid">填充颜色</span><span class="val"><i class="swatch"></i></span><span class="ex"></span></div>
              <div class="prow"><span class="num"></span><span class="nm"></span><span class="val"></span><span class="ex"></span></div>
            </div>
            <div class="pscroll"><i></i></div>
          </div>
        </div>

        <div class="d-col d-param">
          <div class="band-s"></div>
          <div class="phead">参数图</div>
          <div class="p-opts">
            <span class="radio radio-on"></span><span class="r-l">角度放坡形式</span>
            <span class="radio"></span><span>底宽放坡形式</span>
            <span class="peijin">配筋形式</span>
          </div>
          <div class="p-draw">
            <svg class="draw-svg" viewBox="637 245 1106 660" width="1106" height="660">
              <g class="al wl">
                <rect x="913.500" y="366.500" width="391" height="165"/>
                <path d="M886.500 366.500H903.700M886.500 531.500H903.700M894.500 366.500V531.500M889 362L899 371M889 527L899 536"/>
                <path d="M996.500 338.500H1037M996.500 338.500V382.700"/>
                <path d="M1174 341.500H1245.600M1174 341.500L1160.200 375M1193 341.500L1179.200 375M1211.900 341.500L1198 375M1231.500 341.500L1217 375"/>
                <path d="M1011.500 439.500H1042.500M1011.500 439.500V503.300"/>
                <path d="M1154 484.500H1214.600M1154 484.500L1136.800 496.700M1173.300 484.500L1156.800 496.700M1192 484.500L1175.700 496.700M1211.200 484.500L1194.700 496.700"/>
                <path d="M1275.500 424.300V458.300M1275.500 430L1291.400 451.300M1275.500 445L1291.400 464.300M1275.500 458.300L1291.400 478.300"/>
                <path d="M1320.500 373.300V424.300M1313 373.500H1330.700M1313 424.500H1330.700M1316 370L1325 377M1316 421L1325 428"/>
                <path d="M1318.500 450V500.300M1310.400 450.500H1330.700M1310.400 500.500H1330.700M1314 447L1322 454M1314 497L1322 504"/>
                <path d="M1148.200 506.500H1165.400M1157.500 506V534M1153 503L1162 510M1153 528L1162 537"/>
                <path d="M1075.500 506.500H1129.500M1075.500 506.500V655.500M1129.500 506.500V655.500"/>
                <path d="M1059 655.500H1098L1101 647L1104 664L1107 655.500H1142"/>
                <path d="M1038 822.500H1138"/>
              </g>
              <g class="al redl">
                <path d="M922.600 422.700V372H1294.500V422.700M922.600 449V498.700H1294.500V449"/>
              </g>
              <g class="al red2"><path d="M923 634V684H1294V634"/></g>
              <g class="dots">
                <circle cx="928.500" cy="375.300" r="2"/><circle cx="947.500" cy="375.300" r="2"/><circle cx="966.500" cy="375.300" r="2"/><circle cx="985.600" cy="375.300" r="2"/><circle cx="1004.600" cy="375.300" r="2"/><circle cx="1023.700" cy="375.300" r="2"/><circle cx="1042.700" cy="375.300" r="2"/><circle cx="1061.700" cy="375.300" r="2"/><circle cx="1080.800" cy="375.300" r="2"/><circle cx="1099.800" cy="375.300" r="2"/><circle cx="1118.900" cy="375.300" r="2"/><circle cx="1137.900" cy="375.300" r="2"/><circle cx="1157.500" cy="375.300" r="2"/><circle cx="1176.400" cy="375.300" r="2"/><circle cx="1195.400" cy="375.300" r="2"/><circle cx="1214.300" cy="375.300" r="2"/><circle cx="1233.300" cy="375.300" r="2"/><circle cx="1252.200" cy="375.300" r="2"/><circle cx="1271.200" cy="375.300" r="2"/><circle cx="1290.400" cy="375.300" r="2"/>
                <circle cx="928.500" cy="495.300" r="2"/><circle cx="947.500" cy="495.300" r="2"/><circle cx="966.500" cy="495.300" r="2"/><circle cx="985.600" cy="495.300" r="2"/><circle cx="1004.600" cy="495.300" r="2"/><circle cx="1023.700" cy="495.300" r="2"/><circle cx="1042.700" cy="495.300" r="2"/><circle cx="1061.700" cy="495.300" r="2"/><circle cx="1080.800" cy="495.300" r="2"/><circle cx="1099.800" cy="495.300" r="2"/><circle cx="1118.900" cy="495.300" r="2"/><circle cx="1137.900" cy="495.300" r="2"/><circle cx="1157.500" cy="495.300" r="2"/><circle cx="1176.400" cy="495.300" r="2"/><circle cx="1195.400" cy="495.300" r="2"/><circle cx="1214.300" cy="495.300" r="2"/><circle cx="1233.300" cy="495.300" r="2"/><circle cx="1252.200" cy="495.300" r="2"/><circle cx="1271.200" cy="495.300" r="2"/><circle cx="1290.400" cy="495.300" r="2"/>
              </g>
              <g class="mgd"><circle cx="1291.400" cy="451.300" r="2"/><circle cx="1291.400" cy="464.300" r="2"/><circle cx="1291.400" cy="478.300" r="2"/></g>
              <g class="cn">
                <text x="936.400" y="323" textLength="85" lengthAdjust="spacingAndGlyphs">横向面筋</text>
                <text x="1159.600" y="326" textLength="85" lengthAdjust="spacingAndGlyphs">纵向面筋</text>
                <text x="978.400" y="425" textLength="85" lengthAdjust="spacingAndGlyphs">横向底筋</text>
                <text x="1120.600" y="469" textLength="85" lengthAdjust="spacingAndGlyphs">纵向底筋</text>
                <text x="1242.900" y="421.700" transform="rotate(-90 1242.900 421.700)" text-anchor="middle">侧面筋</text>
              </g>
              <g class="gt">
                <text x="1024" y="323" textLength="65" lengthAdjust="spacingAndGlyphs">C8@200</text>
                <text x="1250.500" y="326" textLength="43" lengthAdjust="spacingAndGlyphs">6C14</text>
                <text x="1064.500" y="425" textLength="66" lengthAdjust="spacingAndGlyphs">C8@200</text>
                <text x="1208.500" y="469" textLength="43" lengthAdjust="spacingAndGlyphs">6C20</text>
                <text class="mid" x="878.600" y="446.700" transform="rotate(-90 878.600 446.700)">800</text>
                <text x="1228.700" y="420.200" transform="rotate(-90 1266 420.200)" textLength="75" lengthAdjust="spacingAndGlyphs">C12@200</text>
                <text class="mid" x="1335.900" y="398.300" transform="rotate(-90 1335.900 398.300)">0</text>
                <text class="mid" x="1335.900" y="473" transform="rotate(-90 1335.900 473)">10*d</text>
                <text class="mid" x="1173.300" y="518.300" transform="rotate(-90 1173.300 518.300)">50</text>
              </g>
              <text class="bigt" x="995.600" y="733" textLength="260" lengthAdjust="spacingAndGlyphs">均不翻起二</text>
              <text class="bign" x="1052" y="795" textLength="74" lengthAdjust="spacingAndGlyphs">1-1</text>
            </svg>
          </div>
          <div class="p-foot"><svg viewBox="0 0 10 10"><path d="M7 1h2v2H7zM4 4h2v2H4zM7 4h2v2H7zM1 7h2v2H1zM4 7h2v2H4zM7 7h2v2H7z" fill="#8a8f98"/></svg></div>
        </div>
      </div>
    </div>
  </div>
</div>
</body>
</html>
```
FILE: styles.css
```css
* { box-sizing: border-box; }
html, body { margin: 0; padding: 0; }
body { width: 1784px; height: 1035px; overflow: hidden; background: #fff; }
.defs { position: absolute; }
.app {
  position: relative; width: 1784px; height: 1035px; display: flex; flex-direction: column; overflow: hidden;
  font: 12px/1.2 "Noto Sans CJK SC", "Noto Sans", sans-serif; color: #222; background: #fff;
}
svg { display: block; flex: none; }
i { font-style: normal; }
.i { width: 16px; height: 16px; }

/* triangles */
.tri { display: inline-block; width: 0; height: 0; border: 3.5px solid transparent; border-top: 4px solid #555; border-bottom: 0; margin-left: 7px; flex: none; }
.tri-l { border-top-color: #bbb; }
.tri-down { margin: 7px 0 0; }

/* top */
.top { height: 41px; display: flex; background: #fff; flex: none; }
.logo-cell { width: 55px; position: relative; }
.logo { position: absolute; left: 10px; top: 8px; width: 30px; height: 29px; }
.logo-corner { position: absolute; left: 37px; top: 37px; border: 2.500px solid transparent; border-right-color: #555; border-bottom-color: #555; }
.top-main { flex: 1; display: flex; flex-direction: column; }
.qa { height: 22px; display: flex; align-items: center; padding-top: 2px; }
.qa-i { width: 15px; height: 16px; }
.m-open { margin-left: 7px; width: 16px; }
.m-save { margin-left: 8px; }
.m-undo { margin-left: 8px; width: 16px; }
.m-t1 { margin-left: 3px; }
.m-redo { margin-left: 7px; width: 16px; }
.m-t2 { margin-left: 3px; }
.m-doc { margin-left: 9px; width: 14px; height: 18px; }
.m-t3 { margin-left: 5px; }
.doc-title { margin-left: 554px; font-size: 12px; margin-top: -1px; white-space: nowrap; letter-spacing: .1px; }
.tabs { height: 19px; display: flex; }
.tab { width: 50px; text-align: center; line-height: 19px; }
.tab:nth-child(1) { margin-left: -7px; width: 46px; padding-left: 5px; }
.tab:nth-child(2) { margin-left: 8px; width: 70px; }
.tab-on { width: 50px; margin-left: 2px; background: #4b9eea; color: #fff; border-radius: 2px 2px 0 0; }

/* ribbon */
.ribbon {
  height: 97px; flex: none; display: flex; padding-top: 2px;
  border-top: 1px solid #d9d9d9; border-bottom: 1px solid #9d9d9d;
  background: linear-gradient(#fff 0, #fff 45%, #eef0f1 100%);
}
.grp { border-right: 1px solid #d6d6d6; display: flex; flex-direction: column; height: 93px; margin-bottom: 1px; }
.grp-body { height: 70px; display: flex; }
.grp-foot { height: 23px; display: flex; align-items: center; justify-content: center; color: #333; }
.g1 { width: 146px; }
.g2 { width: 193px; padding-left: 9px; }
.g3 { width: 301px; padding-left: 10px; }
.g4 { width: 236px; padding-left: 8px; }
.g5 { width: 120px; padding-left: 3px; }
.g6 { width: 160px; padding-left: 1px; }
.g7 { width: 279px; }
.col { display: flex; flex-direction: column; }
.w80 { width: 80px; }
.w111 { width: 111px; }
.w100 { width: 100px; }
.w55 { width: 55px; }
.w54 { width: 54px; }
.w102 { width: 102px; }
.it { height: 23px; display: flex; align-items: center; gap: 3px; white-space: nowrap; }
.it .tri { margin-left: 4px; }
.off { color: #aaa; }
.big { display: flex; flex-direction: column; align-items: center; white-space: nowrap; text-align: center; }
.big-sel { width: 53px; padding-left: 1px; }
.i-sel { width: 28px; height: 30px; margin: 4px 0 5px; }
.big-pt { width: 46px; }
.i-pt { width: 30px; height: 30px; margin: 4px 0 5px; }
.big-line { width: 40px; height: 67px; margin-top: 2px; background: #c9d9ef; }
.i-line { width: 30px; height: 30px; margin: 1px 0 6px; }
.col-draw { margin-left: 5px; padding-top: 3px; gap: 7px; }
.big-pile { width: 54px; }
.i-pile { width: 28px; height: 24px; margin: 6px 0 7px; }
.big-pile span { line-height: 18px; }
.big-smart { width: 61px; }
.i-smart { width: 30px; height: 30px; margin: 6px 0 3px; }

/* work */
.work { flex: 1; display: flex; flex-direction: column; min-height: 0; }
.floorbar { height: 27px; flex: none; background: #dcdcdf; display: flex; padding: 4px 0 0 3px; gap: 2px; }
.combo { height: 22px; background: #fff; display: flex; align-items: center; justify-content: space-between; padding: 0 5px 0 3px; }
.c-floor { width: 98px; }
.c-type { width: 72px; }
.band { height: 12px; flex: none; background: #d3d4d8; }
.panes { flex: 1; display: flex; min-height: 0; }
.phead { height: 22px; flex: none; background: #eeeeee; color: #808080; display: flex; align-items: center; padding-left: 9px; border-top: 1px solid #c9cbd2; border-bottom: 1px solid #c4c6cc; }

/* trees */
.bgnav { width: 212px; flex: none; display: flex; flex-direction: column; background: #fff; border-right: 1px solid #c8c8c8; border-bottom: 1px solid #c8c8c8; }
.navtools { height: 29px; flex: none; background: #eee; border-bottom: 1px solid #ccc; display: flex; align-items: center; justify-content: space-between; padding: 2px 0 0 8px; }
.addi { width: 14px; height: 12px; }
.listbtn { width: 30px; height: 22px; border: 1px solid #6aa8f0; border-radius: 4px 0 0 4px; background: #eaf3fd; display: flex; align-items: center; padding-left: 2px; margin-right: 23px; }
.listbtn svg { width: 16px; height: 16px; }
.tree { padding-top: 2px; flex: 1; }
.tr { height: 24.07px; display: flex; align-items: center; padding-left: 4px; gap: 6px; white-space: nowrap; color: #111; }
.fd { width: 14px; height: 12px; }
.fo { width: 16px; margin-left: -1px; }
.ch { padding-left: 41px; gap: 0; }
.sel-w { width: 97px; height: 22px; display: flex; align-items: center; gap: 5px; padding-left: 4px; }
.sel-w.on { background: #b3cdee; }

/* bg mid */
.bgmid { width: 284px; flex: none; background: #eee; display: flex; flex-direction: column; justify-content: flex-end; border-right: 5px solid #fff; padding-left: 4px; }
.bgtable { flex: 1; background: #fff; display: flex; flex-direction: column; justify-content: flex-end; border-bottom: 1px solid #ccc; }
.brow { height: 21px; display: grid; grid-template-columns: 23px 101px 94px 41px 16px; flex: none; }
.brow-cut { height: 17px; overflow: hidden; }
.brow span { display: flex; align-items: center; height: 21px; }
.num { background: #eee; border-right: 1px solid #d4d4d4; border-bottom: 1px solid #d4d4d4; justify-content: center; display: flex; align-items: center; color: #333; }
.nm, .val, .ex { border-right: 1px solid #d4d4d4; border-bottom: 1px solid #d4d4d4; display: flex; align-items: center; white-space: nowrap; position: relative; }
.nm { padding-left: 4px; }
.val { padding-left: 4px; }
.ctr { justify-content: center; padding-left: 0; background: #eee; }
.gl { padding-left: 22px; }
.minus { position: absolute; left: 4px; top: 5px; width: 12px; height: 11px; border: 1px solid #888; border-radius: 2px; display: flex; align-items: center; justify-content: center; font-size: 10px; line-height: 1; color: #333; background: #fff; }
.kid { padding-left: 32px; }
.kid::before { content: ""; position: absolute; left: 10px; top: 10px; width: 16px; border-top: 1px solid #d8d8d8; }
.kid::after { content: ""; position: absolute; left: 10px; top: -1px; height: 12px; border-left: 1px solid #d8d8d8; }
.grey { background: #e9e9e9; }
.swatch { width: 89px; height: 11px; margin-left: 4px; border: 1px solid #000; background: #565600; }
.sw-b { width: 77px; margin-left: 4px; }
.bgfoot { height: 30px; flex: none; padding: 3px 0 0 6px; }
.parambtn { display: flex; align-items: center; justify-content: center; width: 80px; height: 24px; background: #fff; border: 1px solid #c8c8c8; border-radius: 3px; }

/* canvas */
.cad { width: 1140px; flex: none; background: #000; overflow: hidden; }
.al { fill: none; shape-rendering: crispEdges; }
.teal { stroke: #009a9a; stroke-width: 1.500; fill: none; }
.cy { stroke: #00e0e0; fill: none; }
.rl { stroke: #d01010; fill: none; }
.dr { stroke: #a80000; stroke-width: 1.500; fill: none; }
.wl { stroke: #fff; fill: none; }
.gr { stroke: #00d000; fill: none; }
.dg { stroke: #3a8a5a; fill: none; }
.mg circle { fill: none; stroke: #e000e0; stroke-width: 1.200; }
.mg path { stroke: #e000e0; fill: none; }
.sq rect { fill: #0a86b8; }
.hh text { fill: #f0f000; font: bold 10px "Liberation Sans", sans-serif; text-anchor: middle; }
.tiny text { fill: #fff; font: bold 7px "Liberation Sans", sans-serif; text-anchor: middle; }
.bub circle { fill: none; stroke: #007000; stroke-width: 1; }
.bubt text { fill: #f4f4f4; font: 18px "Liberation Sans", sans-serif; text-anchor: middle; }
.axg { stroke: #00e000; stroke-width: 3; fill: none; }
.axgf { fill: #00e000; }
.axr { stroke: #f00000; stroke-width: 3; fill: none; }
.axrf { fill: #f00000; }
.axb { fill: #0000c0; }
.axty { fill: #00e000; font: 14px "Liberation Sans", sans-serif; text-anchor: middle; }
.axtx { fill: #f00000; font: 17px "Liberation Sans", sans-serif; }

/* bg right */
.bgright { flex: 1; background: #fff; display: flex; flex-direction: column; border-left: 1px solid #c8c8c8; margin-left: 4px; border-bottom: 1px solid #c8c8c8; }
.rtop { height: 28px; flex: none; background: #eee; border-top: 1px solid #ccc; }
.rtabs { height: 23px; flex: none; background: #e0e0e0; display: flex; justify-content: flex-end; align-items: center; padding: 1px 1px 0 0; color: #444; }
.rtable { margin: 2px 0 0 2px; height: 740px; overflow: hidden; border-bottom: 2px solid #c8c8c8; border-left: 1px solid #c8c8c8; }
.rrow { height: 21px; border-bottom: 1px solid #d4d4d4; display: flex; align-items: center; position: relative; background: linear-gradient(#d4d4d4, #d4d4d4) 131px 0 / 2px 100% no-repeat; color: #111; }
.rhead { background-color: #eee; border-bottom: 2px solid #ccc; }
.rt-hi { margin-left: 102px; padding-top: 1px; white-space: nowrap; }
.rt-lo { margin-left: 42px; padding-top: 1px; white-space: nowrap; }
.rt-tree::before { content: ""; position: absolute; left: 19px; top: 10px; width: 17px; border-top: 1px solid #dcdcdc; }
.rt-tree { background: linear-gradient(#d4d4d4, #d4d4d4) 131px 0 / 2px 100% no-repeat, linear-gradient(#d4d4d4, #d4d4d4) 8px 0 / 1px 100% no-repeat, linear-gradient(#d4d4d4, #d4d4d4) 19px 0 / 1px 100% no-repeat; }

/* status */
.status { height: 25px; flex: none; background: #dcdcdf; display: grid; grid-template-columns: 265px 83px 133px 103px 103px 28px 42px 31px 39px 39px 76px 66px auto; align-items: end; color: #333; }
.s-t { white-space: nowrap; height: 25px; display: flex; align-items: flex-end; padding-bottom: 2px; }
.s-xy { padding-left: 2px; letter-spacing: .9px; }
.sb { height: 22px; background: #d2d2d4; border: 2px solid #a8a8a8; border-bottom: 0; display: flex; align-items: center; justify-content: center; gap: 4px; }
.sb svg { width: 16px; height: 16px; }
.sb .tri { margin-left: 0; }
.sb-on { background: #fff; border: 1px solid #2f7fdc; border-bottom: 0; }
.sb-txt { color: #444; }
.mr3 { margin-right: 3px; }
.mr6 { margin-right: 6px; }

/* dialog */
.dialog { position: absolute; left: 176px; top: 124px; width: 1569px; height: 792px; display: flex; flex-direction: column; }
.d-title { height: 27px; flex: none; background: #2e7ee0; color: #fff; display: flex; align-items: center; justify-content: space-between; padding: 0 9px 0 8px; }
.d-name { padding-top: 1px; }
.d-btns { display: flex; gap: 18px; }
.d-btns svg { width: 10px; height: 10px; }
.d-inner { flex: 1; display: flex; flex-direction: column; min-height: 0; border: 2px solid #c0c5d0; border-top: 0; border-left-width: 1px; background: #eee; }
.d-tools { height: 30px; flex: none; background: #fff; display: flex; align-items: center; border-top: 1px solid #c8d8ee; padding-left: 1px; }
.d-combo { width: 100px; height: 25px; border: 1px solid #aaa; padding: 0 6px 0 4px; }
.sep { width: 1px; height: 26px; background: #e4e4e4; margin: 0 4px 0 3px; }
.tb { display: flex; align-items: center; gap: 4px; white-space: nowrap; height: 26px; }
.tb .tri { margin-left: 6px; }
.b1 { width: 77px; margin-left: 3px; }
.b2 { width: 64px; }
.b2 .tri { margin-left: 2px; }
.b3 { width: 91px; }
.b4 { width: 109px; }
.d-body { flex: 1; display: flex; min-height: 0; }
.d-col { display: flex; flex-direction: column; }
.band-s { height: 10px; flex: none; background: #d3d4d8; }
.d-nav { width: 164px; background: #fff; border-right: 2px solid #c0c0c0; }
.tree-d { padding-top: 2px; }
.d-list { width: 289px; margin-left: 3px; background: #fff; border-left: 1px solid #c0c0c0; }
.d-list .phead { padding-left: 7px; }
.l-tools { height: 28px; flex: none; display: flex; align-items: center; padding-left: 5px; border-bottom: 1px solid #ddd; }
.t-new { gap: 2px; }
.t-new .tri { margin-left: 5px; }
.t-dup { margin-left: 9px; }
.t-del { margin-left: 11px; }
.l-search { height: 21px; flex: none; display: flex; align-items: center; justify-content: space-between; padding: 0 8px 0 3px; color: #999; border-bottom: 2px solid #b8b8b8; border-top: 1px solid #c8c8c8; }
.l-search svg { width: 12px; height: 12px; }
.l-tree { height: 319px; flex: none; padding-top: 1px; border-bottom: 1px solid #b8b8b8; margin-bottom: 4px; }
.lt { height: 24px; display: flex; align-items: center; white-space: nowrap; }
.lt1 { padding-left: 10px; gap: 8px; }
.lt2 { padding-left: 29px; gap: 9px; }
.lt3 { padding-left: 60px; }
.lt-sel { width: 66px; height: 21px; background: #b3cdee; display: flex; align-items: center; }
.tw { width: 0; height: 0; border-left: 5px solid transparent; border-bottom: 5px solid #444; }
.band-p { height: 10px; }
.props { flex: 1; display: flex; min-height: 0; background: #fff; overflow: hidden; }
.ptable { width: 272px; flex: none; padding-top: 1px; }
.prow { height: 21px; display: grid; grid-template-columns: 21px 101px 109px 41px; }
.prow > span { padding-top: 1px; }
.phdr .num { background: #eee; }
.hd-on { background: #7db8f5; color: #fff; }
.num-on { background: #7db8f5; color: #fff; }
.lnk { color: #2f6fe0; }
.val-on { border: 2px solid #4a9be8; padding-left: 3px; justify-content: space-between; padding-right: 10px; }
.ex { justify-content: center; }
.prow > .ex { padding-top: 0; }
.cb { width: 14px; height: 14px; border: 1px solid #8e8e8e; border-radius: 2px; background: #fff; }
.pscroll { flex: 1; padding: 15px 0 0 5px; background: #fff; border-right: 1px solid #c0c0c0; }
.pscroll i { display: block; width: 7px; height: 248px; background: #c8c8c8; border-radius: 4px; }
.d-param { flex: 1; margin-left: 4px; background: #eee; }
.p-opts { height: 32px; flex: none; background: #fff; display: flex; align-items: flex-start; padding: 6px 0 0 1px; }
.radio { width: 14px; height: 14px; border: 1px solid #8e8e8e; border-radius: 50%; background: #fff; flex: none; margin-right: 4px; }
.radio-on { background: radial-gradient(circle, #3f8ff0 0, #3f8ff0 3.500px, #fff 4px); }
.r-l { margin-right: 7px; }
.peijin { margin-left: auto; margin-top: -6px; width: 79px; height: 26px; background: #2e7ee0; color: #fff; border-radius: 4px; display: flex; align-items: center; justify-content: center; }
.p-draw { height: 660px; flex: none; background: #000; overflow: hidden; }
.draw-svg text { dominant-baseline: central; }
.redl { stroke: #ff0000; stroke-width: 3; }
.red2 { stroke: #ff0000; stroke-width: 2; }
.dots circle { fill: #ffff00; }
.mgd circle { fill: #ff00ff; }
.cn text { fill: #f0f0f0; font: 21px "Noto Sans CJK SC", sans-serif; stroke: #000; stroke-width: .35px; }
.gt text { fill: #00e000; font: 22px "Liberation Serif", serif; }
.gt .mid { text-anchor: middle; }
.bigt { fill: #fff; font: 52px "Noto Sans CJK SC", sans-serif; stroke: #000; stroke-width: .8px; }
.bign { fill: #fff; font: 58px "Liberation Serif", serif; stroke: #000; stroke-width: 1.200px; }
.p-foot { flex: 1; display: flex; justify-content: flex-end; align-items: flex-end; padding: 0 1px 0 0; }
.p-foot svg { width: 10px; height: 10px; }
```
